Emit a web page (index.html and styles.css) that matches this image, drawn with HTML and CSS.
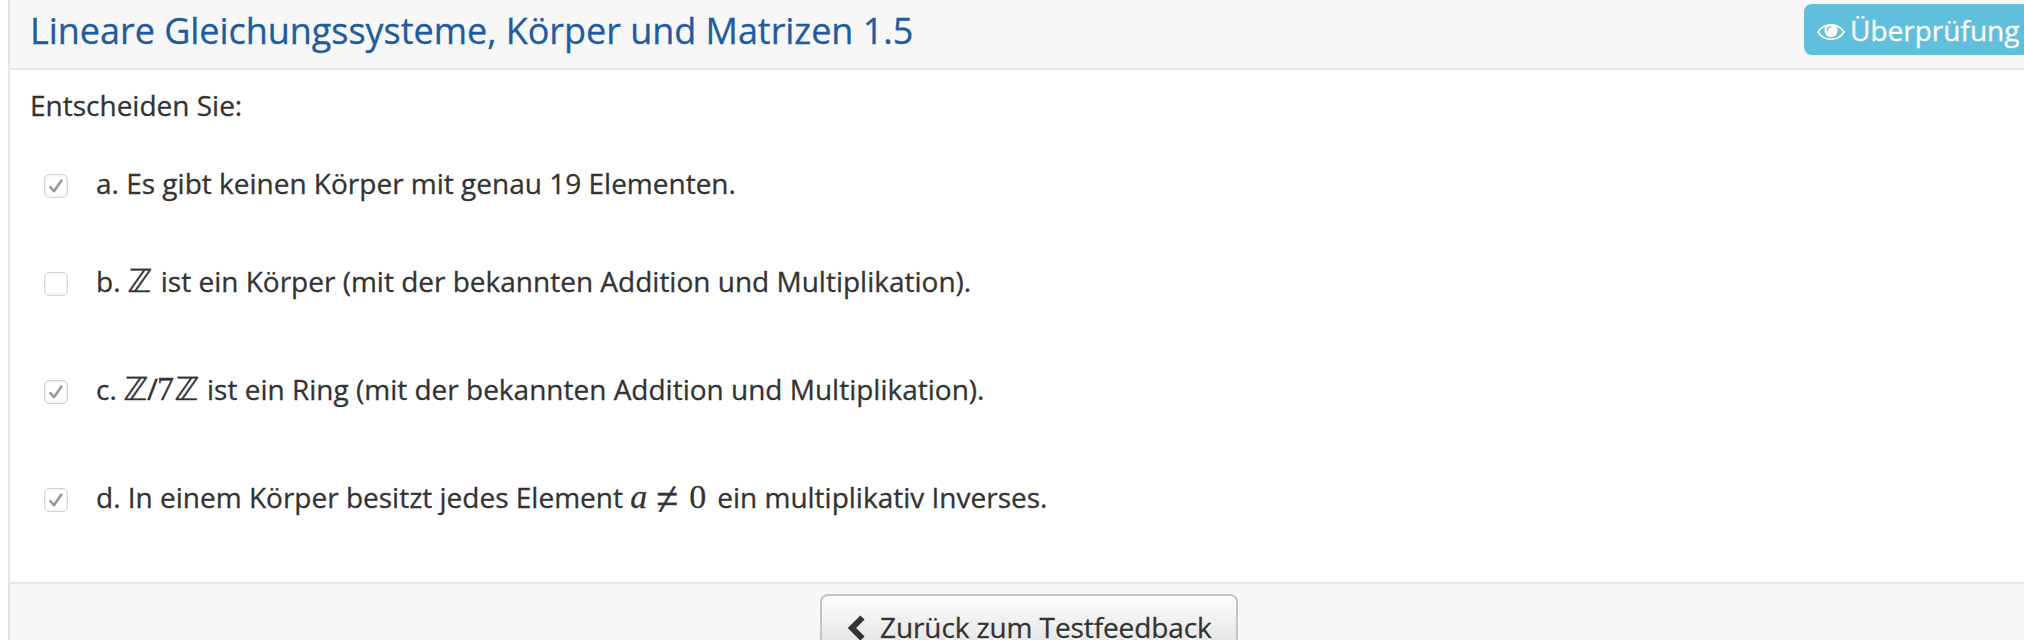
FILE: index.html
```
<!DOCTYPE html>
<html lang="de">
<head>
<meta charset="utf-8">
<title>Lineare Gleichungssysteme, Körper und Matrizen 1.5</title>
<link rel="stylesheet" href="styles.css">
</head>
<body>
<main class="panel">
  <header class="head">
    <h1 class="title">Lineare Gleichungssysteme, Körper und Matrizen 1.5</h1>
    <a class="review"><svg class="eye" viewBox="0 0 28 18"><path d="M1 9C7-.6 21-.6 27 9C21 18.6 7 18.6 1 9Z" fill="none" stroke="#fff" stroke-width="1.7"/><circle cx="14" cy="7.5" r="6.6" fill="#fff"/><path d="M10.3 7.3Q10.5 4 13.7 3.7" fill="none" stroke="#5fbfdd" stroke-width="1.3" stroke-linecap="round"/></svg><span class="review-text">Überprüfung</span></a>
  </header>
  <section class="body">
    <p class="prompt">Entscheiden Sie:</p>
    <div class="answer"><span class="box"><svg viewBox="0 0 24 24"><path d="M6.3 13.2L10 17.2L17.4 6.5"/></svg></span><p class="text">a. Es gibt keinen Körper mit genau 19 Elementen.</p></div>
    <div class="answer"><span class="box"></span><p class="text">b. <span class="m m-z">ℤ</span><span class="after-b">ist ein Körper (mit der bekannten Addition und Multiplikation).</span></p></div>
    <div class="answer"><span class="box"><svg viewBox="0 0 24 24"><path d="M6.3 13.2L10 17.2L17.4 6.5"/></svg></span><p class="text">c. <span class="m m-z">ℤ</span><span class="m m-slash">/</span><span class="m m-seven">7</span><span class="m m-z">ℤ</span><span class="after-c">ist ein Ring (mit der bekannten Addition und Multiplikation).</span></p></div>
    <div class="answer"><span class="box"><svg viewBox="0 0 24 24"><path d="M6.3 13.2L10 17.2L17.4 6.5"/></svg></span><p class="text">d. In einem Körper besitzt jedes Element <span class="m m-a">a</span><span class="m m-ne">≠</span><span class="m m-zero">0</span><span class="after-d">ein multiplikativ Inverses.</span></p></div>
  </section>
  <footer class="foot">
    <a class="back"><svg class="chevron" viewBox="0 0 18 26"><path d="M14.5 2.5L4 13L14.5 23.5" fill="none" stroke="#333" stroke-width="6"/></svg><span class="back-text">Zurück zum Testfeedback</span></a>
  </footer>
</main>
</body>
</html>
```
FILE: styles.css
```
* { box-sizing: border-box; }
body {
  margin: 0;
  height: 640px;
  overflow: hidden;
  background: #fff;
  color: #333;
  font: 28px/40px "Open Sans", "Noto Sans", sans-serif;
  -webkit-text-stroke: 0.3px currentColor;
}
h1, p { margin: 0; font-weight: 400; }
.panel {
  margin-left: 8px;
  width: 2040px;
  height: 640px;
  border-left: 2px solid #e5e5e5;
  overflow: hidden;
}
.head {
  display: flex;
  justify-content: space-between;
  align-items: flex-start;
  height: 70px;
  padding: 4px 14px 0 20px;
  background: #f7f7f7;
  border-bottom: 2px solid #e5e5e5;
}
.title { color: #1f5c9e; font-size: 36px; line-height: 54px; letter-spacing: -0.04px; white-space: nowrap; }
.review {
  display: flex;
  align-items: center;
  width: 230px;
  height: 51px;
  padding: 0 0 0 12px;
  border-radius: 8px;
  background: #5fbfdd;
  color: #fff;
}
.eye { width: 30px; height: 18px; margin-top: 5px; }
.review-text { margin: 0 0 0 4px; }
.body { height: 512px; padding: 15px 20px 0; }
.prompt { height: 78px; }
.answer { display: flex; height: 108px; padding-left: 14px; }
.answer:nth-child(2) { height: 98px; }
.box {
  width: 24px;
  height: 24px;
  margin-top: 11px;
  border: 1px solid #d6d6d6;
  border-radius: 5px;
  background: #fff;
  box-shadow: inset 0 0 3px #ddd;
}
.box svg { display: block; width: 24px; height: 24px; margin: -1px; }
.box path { fill: none; stroke: #999; stroke-width: 2.6; stroke-linecap: round; stroke-linejoin: round; }
.text { padding-left: 28px; white-space: nowrap; }
.m { display: inline-block; font-family: "Liberation Serif", "DejaVu Serif", serif; font-size: 34px; line-height: 30px; }
.m-z { width: 23px; font-family: "DejaVu Sans", sans-serif; font-size: 32px; transform: skewX(-4deg); }
.m-slash { width: 10px; font-family: "Open Sans", sans-serif; font-size: 30px; }
.m-seven { width: 18px; }
.m-a { width: 26px; font-style: italic; }
.m-ne { width: 33px; font-size: 40px; transform: translateY(4px) scaleY(1.2); }
.m-zero { width: 20px; }
.after-b { padding-left: 10px; }
.after-c { padding-left: 9px; }
.after-d { padding-left: 8px; }
.foot {
  display: flex;
  height: 60px;
  padding: 10px 0 0 810px;
  background: #f7f7f7;
  border-top: 2px solid #e5e5e5;
}
.back {
  display: flex;
  flex: none;
  width: 418px;
  height: 64px;
  padding: 11px 0 0 26px;
  border: 2px solid #c4c4c4;
  border-radius: 8px;
  background: linear-gradient(#fdfdfd, #dedede);
  text-shadow: 0 2px 0 #fff;
}
.back-text { letter-spacing: -0.1px; }
.chevron { width: 18px; height: 26px; margin: 8px 14px 0 0; }
```
